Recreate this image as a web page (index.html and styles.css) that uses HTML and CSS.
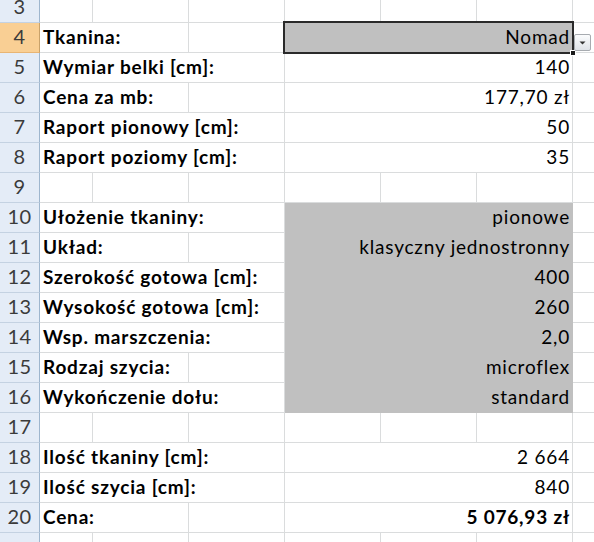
FILE: index.html
```html
<!DOCTYPE html>
<html lang="pl">
<head>
<meta charset="utf-8">
<title>Kalkulator</title>
<link rel="stylesheet" href="styles.css">
</head>
<body>
<div class="sheet">
  <div class="row"><div class="hd">3</div><div class="c"></div><div class="c"></div><div class="c"></div><div class="c"></div><div class="c"></div><div class="c"></div><div class="c last"></div></div>
  <div class="row"><div class="hd sel">4</div><div class="c lab s2">Tkanina:</div><div class="c"></div><div class="c val fill active">Nomad<span class="handle"></span><span class="dd"><svg width="7" height="4" viewBox="0 0 7 4"><path d="M0.5 0.5h6L3.5 3.5z" fill="#333"/></svg></span></div><div class="c last"></div></div>
  <div class="row"><div class="hd">5</div><div class="c lab s3">Wymiar belki [cm]:</div><div class="c val">140</div><div class="c last"></div></div>
  <div class="row"><div class="hd">6</div><div class="c lab s2">Cena za mb:</div><div class="c"></div><div class="c val">177,70 zł</div><div class="c last"></div></div>
  <div class="row"><div class="hd">7</div><div class="c lab s3">Raport pionowy [cm]:</div><div class="c val">50</div><div class="c last"></div></div>
  <div class="row"><div class="hd">8</div><div class="c lab s3">Raport poziomy [cm]:</div><div class="c val">35</div><div class="c last"></div></div>
  <div class="row"><div class="hd">9</div><div class="c"></div><div class="c"></div><div class="c"></div><div class="c"></div><div class="c"></div><div class="c"></div><div class="c last"></div></div>
  <div class="row"><div class="hd">10</div><div class="c lab s3">Ułożenie tkaniny:</div><div class="c val fill">pionowe</div><div class="c last"></div></div>
  <div class="row"><div class="hd">11</div><div class="c lab s2">Układ:</div><div class="c"></div><div class="c val fill">klasyczny jednostronny</div><div class="c last"></div></div>
  <div class="row"><div class="hd">12</div><div class="c lab s3">Szerokość gotowa [cm]:</div><div class="c val fill">400</div><div class="c last"></div></div>
  <div class="row"><div class="hd">13</div><div class="c lab s3">Wysokość gotowa [cm]:</div><div class="c val fill">260</div><div class="c last"></div></div>
  <div class="row"><div class="hd">14</div><div class="c lab s3">Wsp. marszczenia:</div><div class="c val fill">2,0</div><div class="c last"></div></div>
  <div class="row"><div class="hd">15</div><div class="c lab s2">Rodzaj szycia:</div><div class="c"></div><div class="c val fill">microflex</div><div class="c last"></div></div>
  <div class="row"><div class="hd">16</div><div class="c lab s3">Wykończenie dołu:</div><div class="c val fill">standard</div><div class="c last"></div></div>
  <div class="row"><div class="hd">17</div><div class="c"></div><div class="c"></div><div class="c"></div><div class="c"></div><div class="c"></div><div class="c"></div><div class="c last"></div></div>
  <div class="row"><div class="hd">18</div><div class="c lab s3">Ilość tkaniny [cm]:</div><div class="c val">2 664</div><div class="c last"></div></div>
  <div class="row"><div class="hd">19</div><div class="c lab s3">Ilość szycia [cm]:</div><div class="c val">840</div><div class="c last"></div></div>
  <div class="row"><div class="hd">20</div><div class="c lab s2">Cena:</div><div class="c"></div><div class="c val bold">5 076,93 zł</div><div class="c last"></div></div>
  <div class="row"><div class="hd"></div><div class="c"></div><div class="c"></div><div class="c"></div><div class="c"></div><div class="c"></div><div class="c"></div><div class="c last"></div></div>
</div>
</body>
</html>
```

FILE: styles.css
```css
html, body {
  margin: 0;
  padding: 0;
  background: #ffffff;
  overflow: hidden;
}
.sheet {
  width: 594px;
  margin-top: -7px;
  font-family: Lato, "Open Sans", sans-serif;
  font-size: 19px;
  letter-spacing: 0.8px;
  color: #000;
}
.row {
  display: grid;
  grid-template-columns: 40px 53px 96px 96px 96px 96px 96px 1fr;
  height: 30px;
}
.c, .hd {
  box-sizing: border-box;
  height: 30px;
  border-right: 1px solid #dadcdd;
  border-bottom: 1px solid #dadcdd;
  display: flex;
  align-items: flex-end;
  padding-bottom: 4px;
  white-space: nowrap;
}
.hd {
  background: #e4ecf7;
  border-right: 1px solid #9eb6ce;
  border-bottom: 1px solid #c4d2e2;
  justify-content: center;
  color: #3b3b3b;
  font-size: 20px;
  letter-spacing: 0.5px;
}
.hd.sel {
  background: #f9cf94;
  border-bottom-color: #e8b574;
  border-right-color: #c9a26a;
}
.lab {
  font-weight: 700;
  padding-left: 3px;
}
.s2 { grid-column: span 2; }
.s3 { grid-column: span 3; }
.val {
  grid-column: span 3;
  justify-content: flex-end;
  padding-right: 2px;
  position: relative;
}
.fill {
  background: #c0c0c0;
  border-bottom-color: #c0c0c0;
  border-right-color: #c0c0c0;
}
.bold { font-weight: 700; }
.active::after {
  content: "";
  position: absolute;
  left: -2px;
  top: -2px;
  right: -2px;
  bottom: -2px;
  border: 2px solid #2a2a2a;
}
.handle {
  position: absolute;
  right: -4px;
  bottom: -4px;
  width: 6px;
  height: 6px;
  background: #1a1a1a;
  border: 1px solid #fff;
  box-sizing: border-box;
  z-index: 2;
}
.dd {
  position: absolute;
  left: calc(100% + 2px);
  top: 11px;
  width: 17px;
  height: 17px;
  box-sizing: border-box;
  border: 1px solid #a7abb0;
  border-radius: 2px;
  background: linear-gradient(#fbfcfd, #dfe3e8);
  display: flex;
  align-items: center;
  justify-content: center;
  z-index: 3;
}
.last { border-right: none; }
```
